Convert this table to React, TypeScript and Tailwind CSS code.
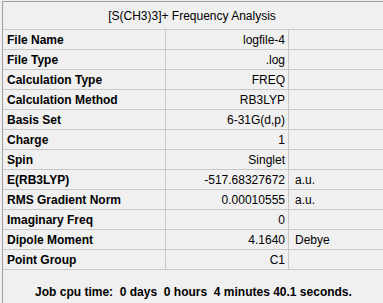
const rows: [string, string, string][] = [
  ['File Name', 'logfile-4', ''],
  ['File Type', '.log', ''],
  ['Calculation Type', 'FREQ', ''],
  ['Calculation Method', 'RB3LYP', ''],
  ['Basis Set', '6-31G(d,p)', ''],
  ['Charge', '1', ''],
  ['Spin', 'Singlet', ''],
  ['E(RB3LYP)', '-517.68327672', 'a.u.'],
  ['RMS Gradient Norm', '0.00010555', 'a.u.'],
  ['Imaginary Freq', '0', ''],
  ['Dipole Moment', '4.1640', 'Debye'],
  ['Point Group', 'C1', ''],
];

export default function App() {
  return (
    <div
      className="w-[383px] h-[303px] bg-[#f0f0f0] overflow-hidden text-black text-[12px] pt-px pl-[2px]"
      style={{ fontFamily: '"Liberation Sans", Arial, sans-serif' }}
    >
      <div className="h-full border-l border-t border-[#a0a0a0] flex flex-col">
        {/* Title */}
        <div className="h-[28px] border-b border-[#c8c8c8] flex items-center justify-center pr-[2px]">
          [S(CH3)3]+ Frequency Analysis
        </div>

        {/* Summary rows */}
        {rows.map(([label, value, unit]) => (
          <div key={label} className="h-[20px] flex border-b border-[#c8c8c8] leading-none">
            <div className="w-[163px] border-r border-[#c8c8c8] flex items-center pl-[4px] font-bold">
              {label}
            </div>
            <div className="w-[123px] border-r border-[#c8c8c8] flex items-center justify-end pr-[3px]">
              {value}
            </div>
            <div className="flex-1 flex items-center pl-[6px]">{unit}</div>
          </div>
        ))}

        {/* CPU time footer */}
        <div className="flex-1 flex items-center justify-center font-bold whitespace-pre pt-[11px] pl-px">
          {'Job cpu time:  0 days  0 hours  4 minutes 40.1 seconds.'}
        </div>
      </div>
    </div>
  );
}
